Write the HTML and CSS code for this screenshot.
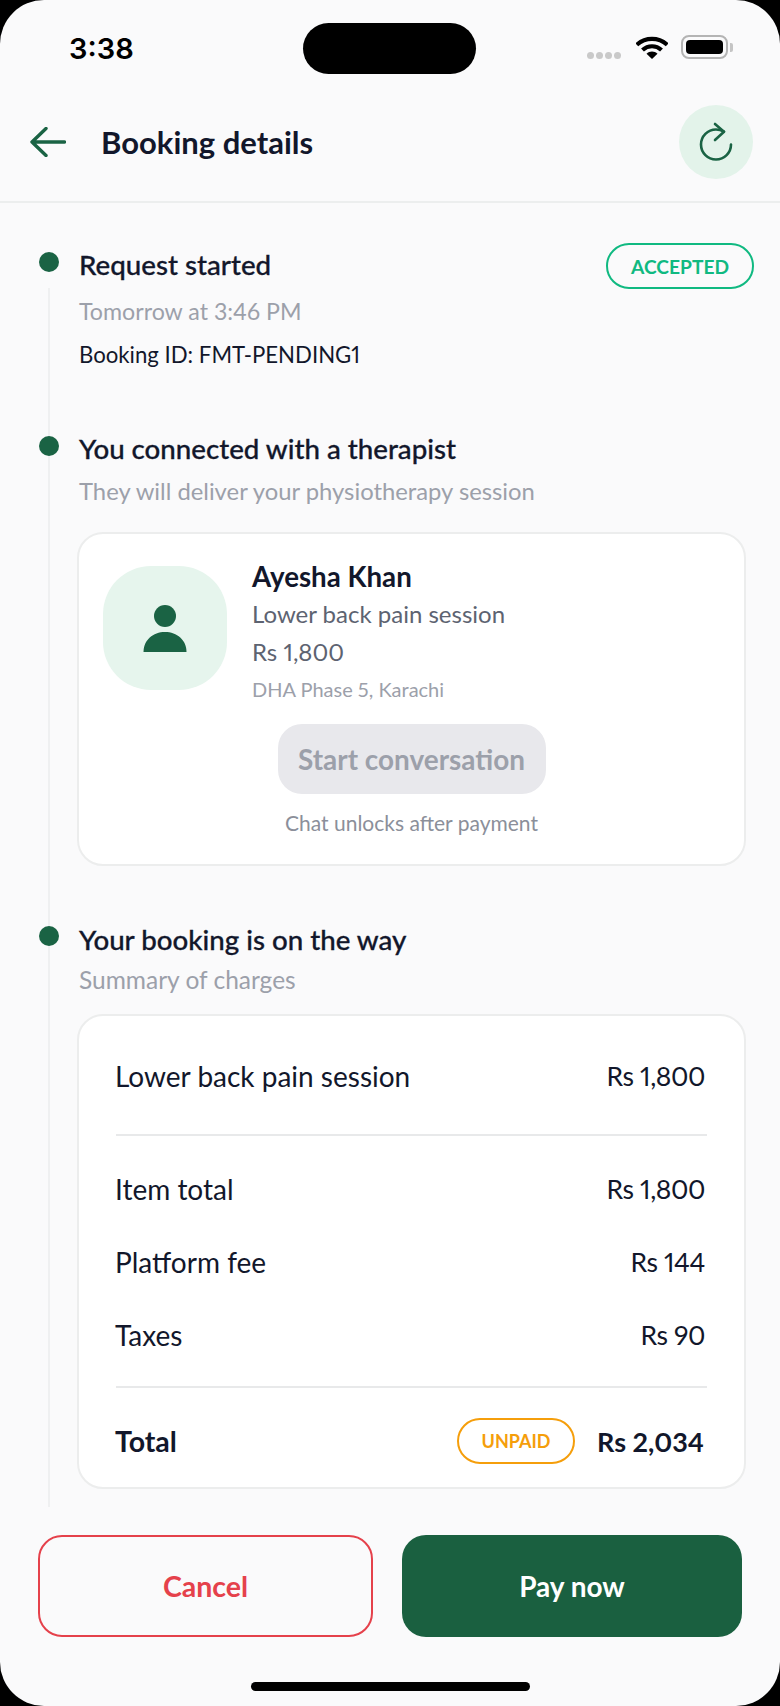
FILE: index.html
```html
<!DOCTYPE html>
<html>
<head>
    <title>Booking details</title>
    <link rel="stylesheet" href="styles.css">
</head>
<body>
    <div class="screen">
        <!-- status bar -->
        <div class="status">
            <span class="clock">3:38</span>
            <div class="island"></div>
            <div class="status-icons">
                <span class="signal"><i></i><i></i><i></i><i></i></span>
                <svg class="wifi" width="32" height="23" viewBox="0 0 32 23">
                    <path d="M0.800 8.800C9.500 0.800 22.500 0.800 31.200 8.800" fill="none" stroke="#000" stroke-width="4.200"/>
                    <path d="M6.500 14C12 9 20 9 25.500 14" fill="none" stroke="#000" stroke-width="4.200"/>
                    <path d="M10.500 17.800C13.500 14.800 18.500 14.800 21.500 17.800L16 23Z" fill="#000"/>
                </svg>
                <div class="battery"><div class="battery-fill"></div></div>
                <div class="battery-cap"></div>
            </div>
        </div>

        <!-- header -->
        <div class="header">
            <svg class="back" width="36" height="30" viewBox="0 0 36 30">
                <path d="M34.500 15H2M16 1.500L2 15L16 28.500" fill="none" stroke="#1a6344" stroke-width="3.400" stroke-linecap="round" stroke-linejoin="round"/>
            </svg>
            <h1 class="title">Booking details</h1>
            <div class="refresh">
                <svg width="36" height="44" viewBox="698 120 36 44">
                    <path d="M724 131.700C721 130 718.500 129.500 716 129.500A15 15 0 1 0 731 144.500" fill="none" stroke="#1a6344" stroke-width="2.600" stroke-linecap="round"/>
                    <path d="M715 124L724 131.700L715 140" fill="none" stroke="#1a6344" stroke-width="2.600" stroke-linecap="round" stroke-linejoin="round"/>
                </svg>
            </div>
        </div>

        <div class="content">
            <div class="line"></div>

            <div class="step step-one">
                <div class="dot"></div>
                <div class="step-head">
                    <h2 class="step-title">Request started</h2>
                    <span class="pill pill-green">ACCEPTED</span>
                </div>
                <p class="muted when">Tomorrow at 3:46 PM</p>
                <p class="booking-id">Booking ID: FMT-PENDING1</p>
            </div>

            <div class="step step-two">
                <div class="dot"></div>
                <h2 class="step-title">You connected with a therapist</h2>
                <p class="muted sub">They will deliver your physiotherapy session</p>
                <div class="card therapist">
                    <div class="therapist-top">
                        <div class="avatar">
                            <svg width="44" height="47" viewBox="0 0 44 47">
                                <ellipse cx="22" cy="11" rx="11" ry="11" fill="#1a6344"/>
                                <path d="M0.500 47C0.500 35 10 27 22 27C34 27 43.500 35 43.500 47Z" fill="#1a6344"/>
                            </svg>
                        </div>
                        <div class="therapist-info">
                            <div class="name">Ayesha Khan</div>
                            <div class="info-line session">Lower back pain session</div>
                            <div class="info-line price">Rs 1,800</div>
                            <div class="place">DHA Phase 5, Karachi</div>
                        </div>
                    </div>
                    <div class="chat">
                        <button class="chat-btn">Start conversation</button>
                        <div class="chat-note">Chat unlocks after payment</div>
                    </div>
                </div>
            </div>

            <div class="step step-three">
                <div class="dot"></div>
                <h2 class="step-title">Your booking is on the way</h2>
                <p class="muted sub sub-charges">Summary of charges</p>
                <div class="card charges">
                    <div class="row row-first"><span>Lower back pain session</span><span class="amount">Rs 1,800</span></div>
                    <div class="divider"></div>
                    <div class="row row-item"><span>Item total</span><span class="amount">Rs 1,800</span></div>
                    <div class="row row-item"><span>Platform fee</span><span class="amount">Rs 144</span></div>
                    <div class="row row-item"><span>Taxes</span><span class="amount">Rs 90</span></div>
                    <div class="divider divider-low"></div>
                    <div class="row row-total">
                        <span>Total</span>
                        <div class="total-right">
                            <span class="pill pill-orange">UNPAID</span>
                            <span class="total-amount">Rs 2,034</span>
                        </div>
                    </div>
                </div>
            </div>
        </div>

        <!-- bottom buttons -->
        <div class="actions">
            <button class="btn btn-cancel">Cancel</button>
            <button class="btn btn-pay">Pay now</button>
        </div>
        <div class="home-bar"></div>
    </div>
</body>
</html>
```

FILE: styles.css
```css
* {
    box-sizing: border-box;
}
body {
    margin: 0;
    background: #000;
    font-family: "Lato", sans-serif;
    font-variant-numeric: proportional-nums;
}
p, h1, h2 {
    margin: 0;
    font-weight: normal;
}
.screen {
    width: 780px;
    height: 1706px;
    background: #fafafb;
    border-radius: 44px;
    overflow: hidden;
    color: #12172b;
}

/* status bar */
.status {
    height: 74px;
    padding: 23px 47px 0 69px;
    display: flex;
    align-items: flex-start;
}
.clock {
    width: 236px;
    font-family: "Inter", sans-serif;
    font-size: 29px;
    font-weight: 600;
    line-height: 52px;
    color: #000;
}
.island {
    width: 174px;
    height: 51px;
    background: #000;
    border-radius: 26px;
}
.status-icons {
    margin-left: 111px;
    height: 51px;
    display: flex;
    align-items: center;
}
.signal {
    display: flex;
    gap: 2px;
    margin-top: 14px;
}
.signal i {
    width: 7px;
    height: 7px;
    border-radius: 50%;
    background: #c9c9c9;
}
.wifi {
    margin-left: 15px;
    margin-bottom: 3px;
}
.battery {
    width: 47px;
    height: 24px;
    margin-left: 13px;
    margin-bottom: 3px;
    padding: 3px;
    border: 2px solid #b4b4b4;
    border-radius: 8px;
}
.battery-fill {
    height: 100%;
    background: #000;
    border-radius: 4px;
}
.battery-cap {
    width: 3px;
    height: 9px;
    margin-left: 2px;
    margin-bottom: 3px;
    background: #c4c4c4;
    border-radius: 0 2px 2px 0;
}

/* header */
.header {
    height: 129px;
    padding: 31px 27px 0 30px;
    display: flex;
    align-items: flex-start;
    border-bottom: 2px solid #eceeee;
}
.back {
    margin-top: 22px;
}
.title {
    margin-left: 35px;
    font-size: 31px;
    font-weight: bold;
    line-height: 74px;
    flex: 1;
}
.refresh {
    width: 74px;
    height: 74px;
    border-radius: 50%;
    background: #e3f3ea;
    display: flex;
    align-items: center;
    justify-content: center;
}

/* timeline */
.content {
    position: relative;
    padding: 0 26px 0 39px;
    height: 1332px;
}
.line {
    position: absolute;
    left: 48px;
    top: 85px;
    width: 2px;
    height: 1219px;
    background: #eff0f1;
}
.step {
    position: relative;
    padding-left: 40px;
}
.dot {
    position: absolute;
    left: 0;
    width: 20px;
    height: 20px;
    border-radius: 50%;
    background: #1a6344;
}
.step-one {
    padding-top: 39px;
}
.step-one .dot {
    top: 49px;
}
.step-two {
    padding-top: 54px;
}
.step-two .dot {
    top: 63px;
}
.step-three {
    padding-top: 52px;
}
.step-three .dot {
    top: 60px;
}
.step-head {
    display: flex;
    justify-content: space-between;
    align-items: flex-start;
}
.step-title {
    font-size: 27.700px;
    font-weight: 500;
    line-height: 44px;
    -webkit-text-stroke: 0.3px currentColor;
}
.step-one .step-title {
    line-height: 46px;
}
.muted {
    color: #9ca0aa;
    font-size: 23.800px;
}
.when {
    font-size: 23.200px;
    line-height: 44px;
}
.booking-id {
    margin-top: 3px;
    font-size: 22.200px;
    line-height: 37px;
    color: #12172b;
}
.sub {
    margin-top: 1px;
    line-height: 38px;
}
.sub-charges {
    margin-top: -1px;
    font-size: 24.500px;
}
.pill {
    display: flex;
    align-items: center;
    justify-content: center;
    border: 2px solid;
    border-radius: 24px;
    font-weight: bold;
}
.pill-green {
    width: 148px;
    height: 46px;
    margin-top: 1px;
    color: #10b981;
    border-color: #10b981;
    font-size: 19.200px;
}
.pill-orange {
    width: 118px;
    height: 46px;
    color: #f59e0b;
    border-color: #f59e0b;
    font-size: 18px;
}

/* cards */
.card {
    width: 669px;
    margin-left: -2px;
    background: #fff;
    border: 2px solid #eceded;
    border-radius: 26px;
}
.therapist {
    margin-top: 22px;
    height: 334px;
    padding: 32px 24px 0 24px;
}
.therapist-top {
    display: flex;
    gap: 25px;
}
.avatar {
    width: 124px;
    height: 124px;
    border-radius: 48px;
    background: #e6f5ed;
    display: flex;
    align-items: center;
    justify-content: center;
}
.therapist-info {
    margin-top: -8px;
}
.name {
    font-size: 27.700px;
    font-weight: bold;
    line-height: 37px;
}
.info-line {
    color: #5d6371;
    font-size: 24px;
    line-height: 38px;
}
.place {
    color: #9ca0aa;
    font-size: 20px;
    line-height: 36px;
}
.chat {
    margin-top: 17px;
    display: flex;
    flex-direction: column;
    align-items: center;
}
.chat-btn {
    width: 268px;
    height: 70px;
    border: none;
    border-radius: 24px;
    background: #e8e8ec;
    color: #9ca0aa;
    font-family: inherit;
    font-size: 27.900px;
    font-weight: bold;
}
.chat-note {
    margin-top: 13px;
    color: #8b8f9a;
    font-size: 21px;
    line-height: 32px;
}
.charges {
    margin-top: 15px;
    height: 475px;
    padding: 0 37px 0 36px;
}
.row {
    display: flex;
    justify-content: space-between;
    align-items: center;
    padding-right: 2px;
    font-size: 28px;
}
.row-first {
    height: 118px;
    padding-top: 1px;
}
.row-item {
    height: 73px;
    padding-bottom: 1px;
}
.amount {
    font-size: 26.500px;
    letter-spacing: -0.4px;
}
.divider {
    height: 2px;
    margin-left: 1px;
    background: #e8e9ea;
    margin-bottom: 17px;
}
.divider-low {
    margin-top: 14px;
    margin-bottom: 0;
}
.row-total {
    height: 96px;
    padding: 10px 3px 0 0;
    font-size: 28.500px;
    font-weight: bold;
}
.total-right {
    display: flex;
    align-items: center;
    gap: 22px;
}
.total-amount {
    font-size: 27px;
}

/* bottom */
.actions {
    padding: 0 38px;
    display: flex;
    gap: 29px;
}
.btn {
    height: 102px;
    border-radius: 24px;
    font-family: inherit;
    font-weight: bold;
}
.btn-cancel {
    width: 335px;
    background: transparent;
    border: 2px solid #e5414b;
    color: #e5414b;
    font-size: 28.500px;
}
.btn-pay {
    width: 340px;
    background: #1a6040;
    border: none;
    color: #fff;
    font-size: 28px;
}
.home-bar {
    width: 279px;
    height: 9px;
    margin: 45px auto 0;
    background: #000;
    border-radius: 5px;
}
```
